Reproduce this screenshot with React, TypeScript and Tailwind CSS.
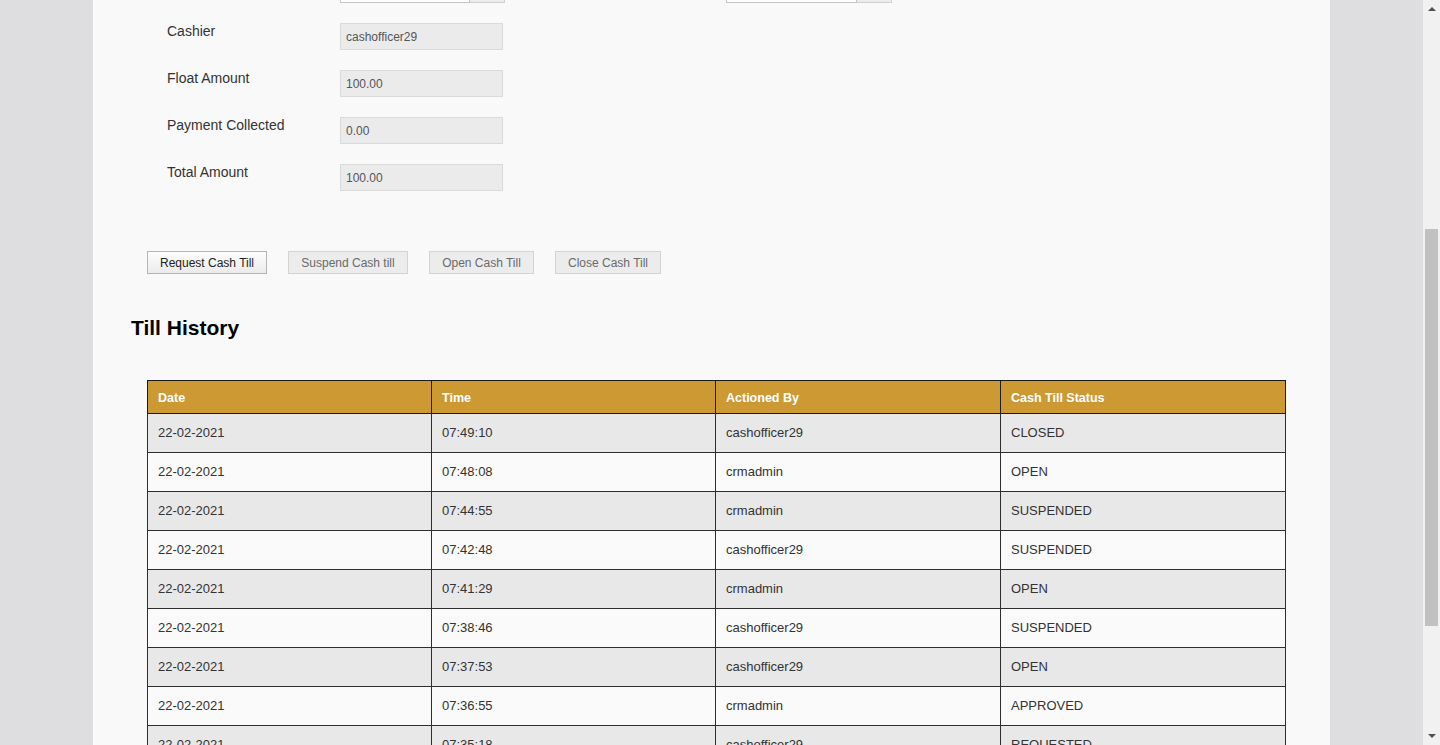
import React from "react";

const rows = [
  ["22-02-2021", "07:49:10", "cashofficer29", "CLOSED"],
  ["22-02-2021", "07:48:08", "crmadmin", "OPEN"],
  ["22-02-2021", "07:44:55", "crmadmin", "SUSPENDED"],
  ["22-02-2021", "07:42:48", "cashofficer29", "SUSPENDED"],
  ["22-02-2021", "07:41:29", "crmadmin", "OPEN"],
  ["22-02-2021", "07:38:46", "cashofficer29", "SUSPENDED"],
  ["22-02-2021", "07:37:53", "cashofficer29", "OPEN"],
  ["22-02-2021", "07:36:55", "crmadmin", "APPROVED"],
  ["22-02-2021", "07:35:18", "cashofficer29", "REQUESTED"],
  ["22-02-2021", "07:33:02", "crmadmin", "OPEN"],
];

const fields = [
  ["Cashier", "cashofficer29"],
  ["Float Amount", "100.00"],
  ["Payment Collected", "0.00"],
  ["Total Amount", "100.00"],
];

function Scrollbar() {
  return (
    <div className="flex w-[17px] shrink-0 flex-col bg-[#f1f1f1]">
      <div className="flex h-[17px] items-center justify-center">
        <svg width="8" height="5" viewBox="0 0 8 5">
          <path d="M0 5L4 1L8 5Z" fill="#505050" />
        </svg>
      </div>
      <div className="h-[212px]" />
      <div className="mx-[2px] h-[397px] bg-[#c1c1c1]" />
      <div className="flex-1" />
      <div className="flex h-[17px] items-center justify-center">
        <svg width="8" height="5" viewBox="0 0 8 5">
          <path d="M0 0L8 0L4 4Z" fill="#505050" />
        </svg>
      </div>
    </div>
  );
}

export default function App() {
  return (
    <div
      className="flex h-[745px] w-[1440px] overflow-hidden bg-[#dedee0] text-[#333]"
      style={{ fontFamily: '"Liberation Sans", Arial, sans-serif' }}
    >
      <div className="w-[93px] shrink-0" />

      <main className="w-[1237px] shrink-0 bg-[#f9f9f9]">
        {/* bottom edge of the fields above the fold */}
        <div className="flex h-[3px] items-end overflow-hidden">
          <div className="ml-[247px] flex h-[26px]">
            <div className="w-[130px] border border-[#c6c6c6] bg-white" />
            <div className="w-[35px] border border-l-0 border-[#d0d0d0] bg-[#ececec]" />
          </div>
          <div className="ml-[221px] flex h-[26px]">
            <div className="w-[131px] border border-[#c6c6c6] bg-white" />
            <div className="w-[35px] border border-l-0 border-[#d0d0d0] bg-[#ececec]" />
          </div>
        </div>

        {/* till details */}
        <div className="mt-[20px] flex flex-col gap-[20px] pl-[74px]">
          {fields.map(([label, value]) => (
            <div key={label} className="flex items-start">
              <label className="w-[173px] text-[14px] leading-[16px] text-[#333]">{label}</label>
              <div className="flex h-[27px] w-[163px] items-center border border-[#dadada] bg-[#ebebeb] px-[5px] text-[12px] text-[#555]">
                {value}
              </div>
            </div>
          ))}
        </div>

        {/* actions */}
        <div className="mt-[60px] flex gap-[21px] pl-[54px] text-[12px]">
          <button className="h-[23px] w-[120px] border border-[#b5b5b5] bg-gradient-to-b from-[#fdfdfd] to-[#ebebeb] text-[#222]">
            Request Cash Till
          </button>
          <button disabled className="h-[23px] w-[120px] border border-[#d3d3d3] bg-[#ececec] text-[#6a6a6a]">
            Suspend Cash till
          </button>
          <button disabled className="h-[23px] w-[105px] border border-[#d3d3d3] bg-[#ececec] text-[#6a6a6a]">
            Open Cash Till
          </button>
          <button disabled className="h-[23px] w-[106px] border border-[#d3d3d3] bg-[#ececec] text-[#6a6a6a]">
            Close Cash Till
          </button>
        </div>

        <h2 className="mt-[42px] pl-[38px] text-[21px] font-bold leading-[24px] text-black">Till History</h2>

        <div className="mt-[40px] pl-[54px]">
          <table className="w-[1138px] table-fixed border-collapse text-[13px]">
            <colgroup>
              <col className="w-[284px]" />
              <col className="w-[284px]" />
              <col className="w-[285px]" />
              <col className="w-[285px]" />
            </colgroup>
            <thead>
              <tr className="bg-[#cc9933] text-left text-white">
                {["Date", "Time", "Actioned By", "Cash Till Status"].map((h) => (
                  <th key={h} className="h-[33px] border border-[#1a1a1a] px-[10px] pt-[3px] text-[12.5px] font-bold">
                    {h}
                  </th>
                ))}
              </tr>
            </thead>
            <tbody>
              {rows.map((r, i) => (
                <tr key={i} className={i % 2 === 0 ? "bg-[#e8e8e8]" : "bg-[#fafafa]"}>
                  {r.map((c, j) => (
                    <td key={j} className="h-[39px] border border-[#2e2e2e] px-[10px] text-[#333]">
                      {c}
                    </td>
                  ))}
                </tr>
              ))}
            </tbody>
          </table>
        </div>
      </main>

      <div className="flex-1" />
      <Scrollbar />
    </div>
  );
}
